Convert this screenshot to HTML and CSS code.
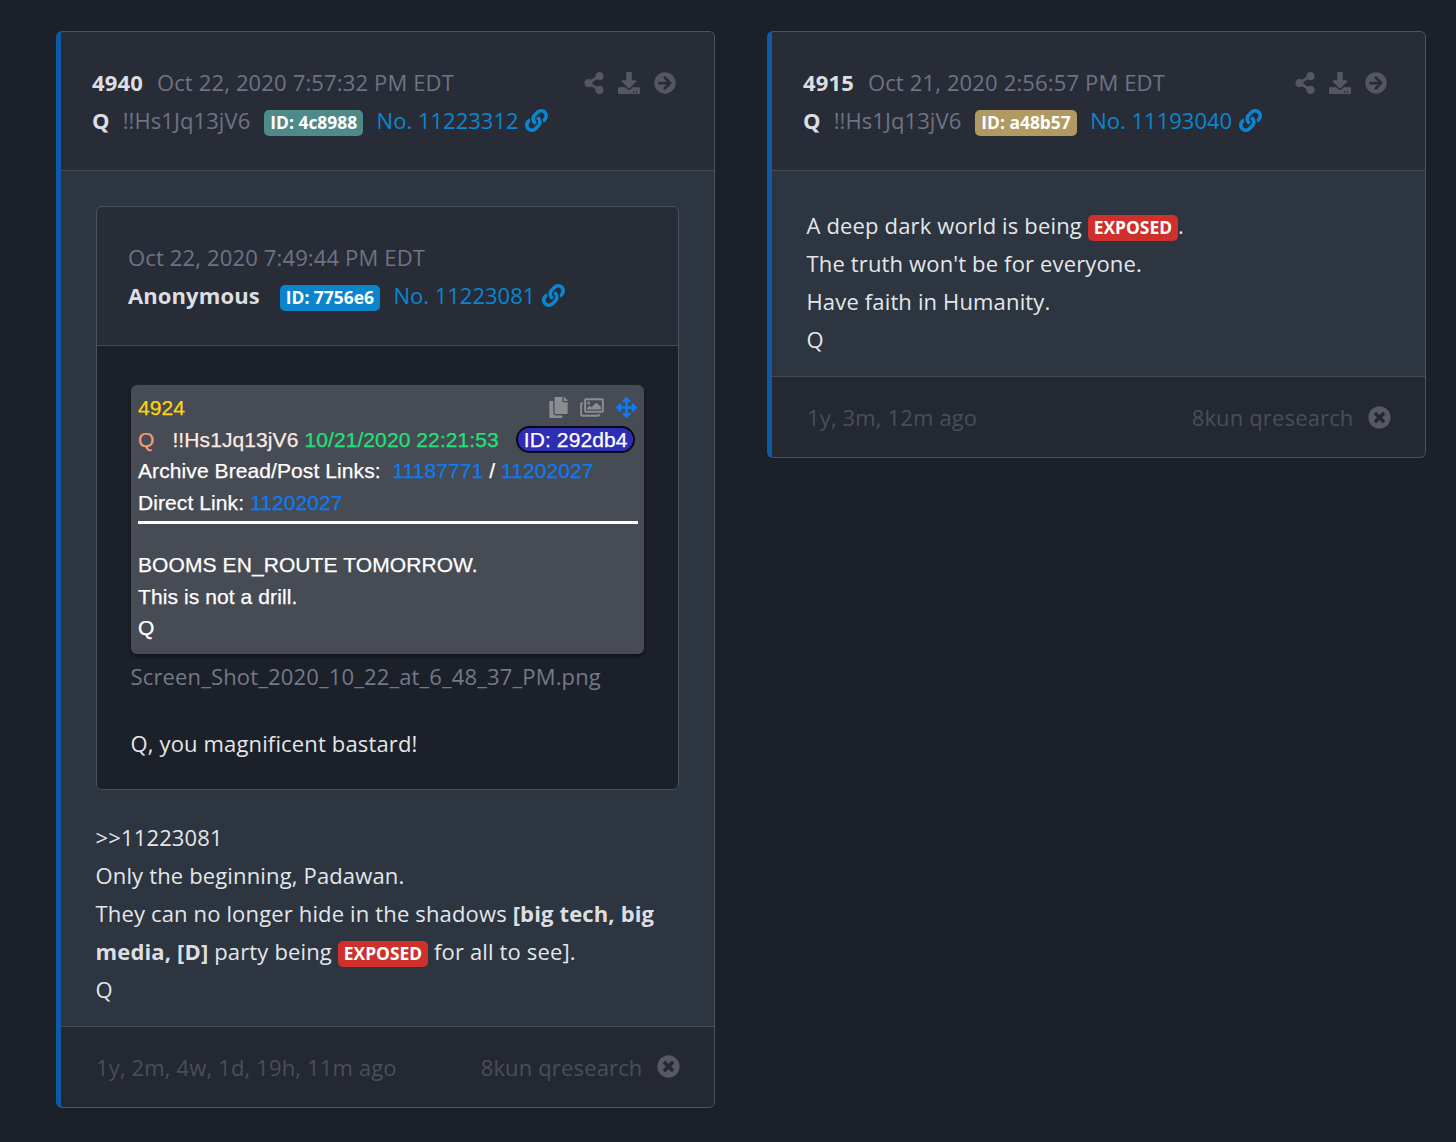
FILE: index.html
```html
<!DOCTYPE html>
<html lang="en">
<head>
<meta charset="utf-8">
<title>Posts</title>
<link rel="stylesheet" href="styles.css">
</head>
<body>
<svg class="defs" width="0" height="0" aria-hidden="true">
  <symbol id="i-share" viewBox="0 0 448 512"><path d="M352 320c-22.608 0-43.387 7.819-59.79 20.895l-102.486-64.054a96.551 96.551 0 0 0 0-41.683l102.486-64.054C308.613 184.181 329.392 192 352 192c53.019 0 96-42.981 96-96S405.019 0 352 0s-96 42.981-96 96c0 7.158.79 14.13 2.276 20.841L155.79 180.895C139.387 167.819 118.608 160 96 160c-53.019 0-96 42.981-96 96s42.981 96 96 96c22.608 0 43.387-7.819 59.79-20.895l102.486 64.054A96.301 96.301 0 0 0 256 416c0 53.019 42.981 96 96 96s96-42.981 96-96-42.981-96-96-96z"/></symbol>
  <symbol id="i-download" viewBox="0 0 512 512"><path d="M216 0h80c13.3 0 24 10.7 24 24v168h87.7c17.8 0 26.7 21.5 14.1 34.1L269.7 378.3c-7.5 7.5-19.8 7.5-27.3 0L90.1 226.1c-12.6-12.6-3.7-34.1 14.1-34.1H192V24c0-13.3 10.7-24 24-24zm296 376v112c0 13.3-10.7 24-24 24H24c-13.3 0-24-10.7-24-24V376c0-13.3 10.7-24 24-24h146.7l49 49c20.1 20.1 52.5 20.1 72.6 0l49-49H488c13.3 0 24 10.7 24 24zm-124 88c0-11-9-20-20-20s-20 9-20 20 9 20 20 20 20-9 20-20zm64 0c0-11-9-20-20-20s-20 9-20 20 9 20 20 20 20-9 20-20z"/></symbol>
  <symbol id="i-arrow" viewBox="0 0 512 512"><path d="M256 8c137 0 248 111 248 248S393 504 256 504 8 393 8 256 119 8 256 8zm-28.9 143.6l75.5 72.4H120c-13.3 0-24 10.7-24 24v16c0 13.3 10.7 24 24 24h182.6l-75.5 72.4c-9.7 9.3-9.9 24.8-.4 34.3l11 10.9c9.4 9.4 24.6 9.4 33.9 0L404.3 273c9.4-9.4 9.4-24.6 0-33.9L271.6 106.3c-9.4-9.4-24.6-9.4-33.9 0l-11 10.9c-9.5 9.6-9.3 25.1.4 34.4z"/></symbol>
  <symbol id="i-link" viewBox="0 0 512 512"><path d="M326.612 185.391c59.747 59.809 58.927 155.698.36 214.59-.11.12-.24.25-.36.37l-67.2 67.2c-59.27 59.27-155.699 59.262-214.96 0-59.27-59.26-59.27-155.7 0-214.96l37.106-37.106c9.84-9.84 26.786-3.3 27.294 10.606.648 17.722 3.826 35.527 9.69 52.721 1.986 5.822.567 12.262-3.783 16.612l-13.087 13.087c-28.026 28.026-28.905 73.66-1.155 101.96 28.024 28.579 74.086 28.749 102.325.51l67.2-67.19c28.191-28.191 28.073-73.757 0-101.83-3.701-3.694-7.429-6.564-10.341-8.569a16.037 16.037 0 0 1-6.947-12.606c-.396-10.567 3.348-21.456 11.698-29.806l21.054-21.055c5.521-5.521 14.182-6.199 20.584-1.731a152.482 152.482 0 0 1 20.522 17.197zM467.547 44.449c-59.261-59.262-155.69-59.27-214.96 0l-67.2 67.2c-.12.12-.25.25-.36.37-58.566 58.892-59.387 154.781.36 214.59a152.454 152.454 0 0 0 20.521 17.196c6.402 4.468 15.064 3.789 20.584-1.731l21.054-21.055c8.35-8.35 12.094-19.239 11.698-29.806a16.037 16.037 0 0 0-6.947-12.606c-2.912-2.005-6.64-4.875-10.341-8.569-28.073-28.073-28.191-73.639 0-101.83l67.2-67.19c28.239-28.239 74.3-28.069 102.325.51 27.75 28.3 26.872 73.934-1.155 101.96l-13.087 13.087c-4.35 4.35-5.769 10.79-3.783 16.612 5.864 17.194 9.042 34.999 9.69 52.721.509 13.906 17.454 20.446 27.294 10.606l37.106-37.106c59.271-59.259 59.271-155.699.001-214.959z"/></symbol>
  <symbol id="i-close" viewBox="0 0 512 512"><path d="M256 8C119 8 8 119 8 256s111 248 248 248 248-111 248-248S393 8 256 8zm121.6 313.1c4.7 4.7 4.7 12.3 0 17L338 377.6c-4.7 4.7-12.3 4.7-17 0L256 312l-65.1 65.6c-4.7 4.7-12.3 4.7-17 0L134.4 338c-4.7-4.7-4.7-12.3 0-17l65.6-65-65.6-65.1c-4.7-4.7-4.7-12.3 0-17l39.6-39.6c4.7-4.7 12.3-4.7 17 0l65 65.7 65.1-65.6c4.7-4.7 12.3-4.7 17 0l39.6 39.6c4.7 4.7 4.7 12.3 0 17L312 256l65.6 65.1z"/></symbol>
  <symbol id="i-copy" viewBox="0 0 448 512"><path d="M320 448v40c0 13.255-10.745 24-24 24H24c-13.255 0-24-10.745-24-24V120c0-13.255 10.745-24 24-24h72v296c0 30.879 25.121 56 56 56h168zm0-344V0H152c-13.255 0-24 10.745-24 24v368c0 13.255 10.745 24 24 24h272c13.255 0 24-10.745 24-24V128H344c-13.2 0-24-10.8-24-24zm120.971-31.029L375.029 7.029A24 24 0 0 0 358.059 0H352v96h96v-6.059a24 24 0 0 0-7.029-16.97z"/></symbol>
  <symbol id="i-images" viewBox="0 0 576 512"><path fill-rule="evenodd" d="M144 32h384c26.5 0 48 21.5 48 48v256c0 26.5-21.500 48-48 48H144c-26.500 0-48-21.500-48-48V80c0-26.500 21.500-48 48-48zm6 48a6 6 0 0 0-6 6v244a6 6 0 0 0 6 6h372a6 6 0 0 0 6-6V86a6 6 0 0 0-6-6z"/><path d="M480 416v16c0 26.500-21.500 48-48 48H48c-26.500 0-48-21.500-48-48V176c0-26.500 21.500-48 48-48h16v48H54a6 6 0 0 0-6 6v244a6 6 0 0 0 6 6h372a6 6 0 0 0 6-6v-10z"/><circle cx="208" cy="148" r="36"/><path d="M168 304v-32l56-56c4.700-4.700 12.300-4.700 17 0l31 40 112-112c4.700-4.700 12.300-4.700 17 0l103 88v72z"/></symbol>
  <symbol id="i-move" viewBox="0 0 512 512"><path d="M352.201 425.775l-79.196 79.196c-9.373 9.373-24.568 9.373-33.941 0l-79.196-79.196c-15.119-15.119-4.411-40.971 16.971-40.97h51.162L228 284H127.196v51.162c0 21.382-25.851 32.09-40.971 16.971L7.029 272.937c-9.373-9.373-9.373-24.569 0-33.941L86.225 159.8c15.119-15.119 40.971-4.411 40.971 16.971V228H228V127.196h-51.23c-21.382 0-32.09-25.851-16.971-40.971l79.196-79.196c9.373-9.373 24.568-9.373 33.941 0l79.196 79.196c15.119 15.119 4.411 40.971-16.971 40.971h-51.162V228h100.804v-51.162c0-21.382 25.851-32.09 40.97-16.971l79.196 79.196c9.373 9.373 9.373 24.569 0 33.941L425.773 352.2c-15.119 15.119-40.971 4.411-40.97-16.971V284H284v100.804h51.23c21.382 0 32.09 25.851 16.971 40.971z"/></symbol>
</svg>

<main class="page">
  <article class="card post">
    <header class="card-head">
      <div class="head-text">
        <div class="line"><span class="num">4940</span><span class="date">Oct 22, 2020 7:57:32 PM EDT</span></div>
        <div class="line"><span class="name">Q</span><span class="trip">!!Hs1Jq13jV6</span><span class="badge teal">ID: 4c8988</span><span class="post-no">No. 11223312</span><svg class="link-icon"><use href="#i-link"/></svg></div>
      </div>
      <div class="actions">
        <svg class="act act-share"><use href="#i-share"/></svg>
        <svg class="act act-down"><use href="#i-download"/></svg>
        <svg class="act act-arrow"><use href="#i-arrow"/></svg>
      </div>
    </header>
    <section class="card-body">
      <article class="card quote">
        <header class="quote-head">
          <div class="line"><span class="date-only">Oct 22, 2020 7:49:44 PM EDT</span></div>
          <div class="line"><span class="name anon">Anonymous</span><span class="badge blue">ID: 7756e6</span><span class="post-no">No. 11223081</span><svg class="link-icon"><use href="#i-link"/></svg></div>
        </header>
        <div class="quote-body">
          <figure class="shot">
            <div class="shot-top">
              <div class="shot-line yellow">4924</div>
              <div class="shot-icons">
                <svg class="s-copy"><use href="#i-copy"/></svg>
                <svg class="s-images"><use href="#i-images"/></svg>
                <svg class="s-move"><use href="#i-move"/></svg>
              </div>
            </div>
            <div class="shot-line shot-meta"><span class="orange">Q</span><span class="pinkish">!!Hs1Jq13jV6</span> <span class="green">10/21/2020 22:21:53</span><span class="pill">ID: 292db4</span></div>
            <div class="shot-line">Archive Bread/Post Links:<a class="s-link first">11187771</a> / <a class="s-link">11202027</a></div>
            <div class="shot-line">Direct Link: <a class="s-link">11202027</a></div>
            <hr class="shot-rule">
            <div class="shot-line">BOOMS EN_ROUTE TOMORROW.</div>
            <div class="shot-line">This is not a drill.</div>
            <div class="shot-line">Q</div>
          </figure>
          <div class="filename">Screen_Shot_2020_10_22_at_6_48_37_PM.png</div>
          <p class="para quote-text">Q, you magnificent bastard!</p>
        </div>
      </article>
      <div class="para reply">
        <div>&gt;&gt;11223081</div>
        <div>Only the beginning, Padawan.</div>
        <div>They can no longer hide in the shadows <b>[big tech, big</b></div>
        <div><b>media, [D]</b> party being <span class="badge red">EXPOSED</span> for all to see].</div>
        <div>Q</div>
      </div>
    </section>
    <footer class="card-foot">
      <span>1y, 2m, 4w, 1d, 19h, 11m ago</span>
      <span class="foot-right">8kun qresearch<svg class="close"><use href="#i-close"/></svg></span>
    </footer>
  </article>

  <article class="card post">
    <header class="card-head">
      <div class="head-text">
        <div class="line"><span class="num">4915</span><span class="date">Oct 21, 2020 2:56:57 PM EDT</span></div>
        <div class="line"><span class="name">Q</span><span class="trip">!!Hs1Jq13jV6</span><span class="badge gold">ID: a48b57</span><span class="post-no">No. 11193040</span><svg class="link-icon"><use href="#i-link"/></svg></div>
      </div>
      <div class="actions">
        <svg class="act act-share"><use href="#i-share"/></svg>
        <svg class="act act-down"><use href="#i-download"/></svg>
        <svg class="act act-arrow"><use href="#i-arrow"/></svg>
      </div>
    </header>
    <section class="card-body">
      <div class="para reply only">
        <div>A deep dark world is being <span class="badge red">EXPOSED</span>.</div>
        <div>The truth won't be for everyone.</div>
        <div>Have faith in Humanity.</div>
        <div>Q</div>
      </div>
    </section>
    <footer class="card-foot">
      <span>1y, 3m, 12m ago</span>
      <span class="foot-right">8kun qresearch<svg class="close"><use href="#i-close"/></svg></span>
    </footer>
  </article>
</main>
</body>
</html>
```
FILE: styles.css
```css
* { box-sizing: border-box; }
html, body { margin: 0; padding: 0; }
body {
  background: #1c2028;
  height: 1142px;
  overflow: hidden;
  font-family: "Open Sans", "Noto Sans", sans-serif;
  font-size: 22px;
  font-weight: 400;
  line-height: 38px;
  letter-spacing: 0.15px;
  color: #e4e6ea;
}
.defs { position: absolute; }
.page {
  display: flex;
  align-items: flex-start;
  gap: 52px;
  padding: 31px 30px 0 56px;
}
.card {
  border: 1px solid #4d525e;
  border-radius: 6px;
  overflow: hidden;
}
.post {
  width: 659px;
  flex: none;
  border-left: 5px solid #0f5aa6;
  background: #2d3540;
}
.card-head {
  display: flex;
  justify-content: space-between;
  background: #282c37;
  padding: 31px 38px 31px 31px;
  border-bottom: 1px solid #464b56;
}
.line { display: flex; align-items: center; height: 38px; white-space: nowrap; }
.num { font-weight: 700; color: #dcdee2; margin-right: 14px; }
.date, .date-only { color: #6f7383; }
.name { font-weight: 700; color: #dcdee2; margin-right: 13px; }
.trip { color: #6f7383; margin-right: 14px; letter-spacing: 0.08px; }
.anon { margin-right: 20px; letter-spacing: 0.1px; }
.badge {
  display: inline-block;
  font-size: 17.4px;
  font-weight: 700;
  line-height: 25px;
  height: 26px;
  padding: 0 6px;
  border-radius: 5px;
  color: #fff;
  letter-spacing: 0;
}
.line .badge { margin: 5px 13.5px 0 0; }
.teal { background: #4f8a8b; }
.blue { background: #0b84cc; }
.gold { background: #b09a62; }
.red { background: #d0302c; }
.post-no { color: #0a86d0; letter-spacing: 0; }
.link-icon {
  width: 23px;
  height: 23px;
  margin-left: 6.5px;
  fill: #0a86d0;
}
.actions { display: flex; height: 38px; align-items: center; gap: 14px; padding-top: 1px; }
.act { fill: #555863; height: 22px; }
.act-share { width: 20px; }
.act-down { width: 22px; }
.act-arrow { width: 22px; }
.card-body { padding: 35px 35px 18px 34.5px; }
.quote { background: #282c37; }
.quote-head {
  padding: 31px 32px 31px 31.5px;
  border-bottom: 1px solid #464b56;
}
.quote-body {
  background: #1c2028;
  padding: 39px 34px 27px;
}
.shot {
  margin: 0;
  background: #474b54;
  border-radius: 6px;
  padding: 7px 6px 10px 7.5px;
  font-family: "Liberation Sans", Arial, sans-serif;
  font-weight: 400;
  font-size: 21px;
  line-height: 31.5px;
  letter-spacing: 0.09px;
  color: #fff;
  -webkit-text-stroke: 0.25px currentColor;
  box-shadow: 0 -4px 4px -2px #20242b, 0 3px 3px #14161b;
}
.shot-top { display: flex; justify-content: space-between; align-items: center; height: 31.5px; }
.shot-line { white-space: nowrap; height: 31.5px; }
.shot-meta { display: flex; align-items: center; }
.yellow { color: #fdd60a; }
.orange { color: #f19a75; margin-right: 18px; }
.pinkish { color: #fbe9e4; margin-right: 6px; }
.green { color: #22e07a; }
.pill {
  background: #2e2eb4;
  border: 2px solid #0a0a14;
  border-radius: 14px;
  height: 27px;
  line-height: 23px;
  padding: 0 6px;
  margin-left: 17px;
}
.s-link { color: #0f7bf2; }
.s-link.first { margin-left: 11.5px; }
.shot-icons { display: flex; align-items: center; gap: 12px; margin-right: 1px; }
.s-copy { width: 19px; height: 21px; fill: #8b8d91; }
.s-images { width: 24px; height: 21px; fill: #8b8d91; }
.s-move { width: 21px; height: 21px; fill: #0f7bf2; }
.shot-rule {
  height: 3px;
  border: 0;
  margin: 3px 0 25px;
  background: #fff;
}
.filename { color: #747989; margin-top: 3px; white-space: nowrap; }
.para { color: #e4e6ea; margin: 0; }
.quote-text { margin-top: 29px; }
.reply { margin-top: 28px; }
.reply.only { margin-top: 0; }
.reply b { font-weight: 700; color: #dcdee2; }
.card-foot {
  display: flex;
  justify-content: space-between;
  align-items: center;
  height: 81px;
  padding: 0 34.5px 0 35px;
  background: #242831;
  border-top: 1px solid #464b56;
  color: #4a4e5a;
}
.foot-right { display: flex; align-items: center; }
.close { width: 23px; height: 23px; margin-left: 14px; fill: #565965; }
```
